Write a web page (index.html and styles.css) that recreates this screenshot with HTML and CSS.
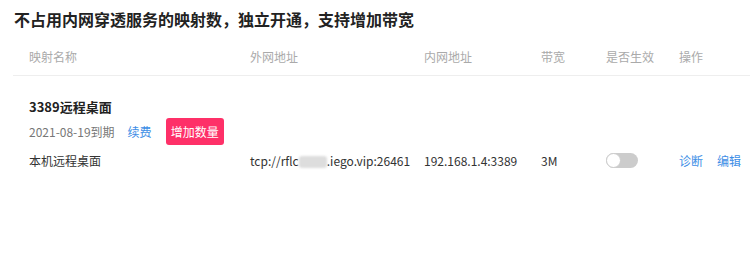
FILE: index.html
```html
<!DOCTYPE html>
<html lang="zh-CN">
<head>
  <meta charset="UTF-8" />
  <title>映射列表</title>
  <link rel="stylesheet" href="styles.css">
</head>
<body>

  <h2 class="title">不占用内网穿透服务的映射数，独立开通，支持增加带宽</h2>

  <div class="table">
    <div class="row head">
      <span>映射名称</span>
      <span>外网地址</span>
      <span>内网地址</span>
      <span>带宽</span>
      <span>是否生效</span>
      <span>操作</span>
    </div>

    <div class="group">
      <div class="group-name">3389远程桌面</div>
      <div class="group-info">
        <span class="expire">2021-08-19到期</span>
        <a class="link">续费</a>
        <button class="add-btn">增加数量</button>
      </div>
      <div class="row item">
        <span>本机远程桌面</span>
        <span>tcp://rflc<i class="mask"></i>.iego.vip:26461</span>
        <span>192.168.1.4:3389</span>
        <span>3M</span>
        <span><i class="switch"></i></span>
        <span class="ops"><a class="link">诊断</a><a class="link">编辑</a></span>
      </div>
    </div>
  </div>

</body>
</html>
```

FILE: styles.css
```css
body {
  margin: 0;
  font-family: "Noto Sans CJK SC", "Noto Sans", sans-serif;
  color: #333;
  background: #fff;
}
.title {
  margin: 0;
  padding: 8px 14px 0;
  height: 30px;
  line-height: 22px;
  font-size: 16px;
  font-weight: bold;
  color: #222;
}
.table {
  margin-left: 13px;
}
.row {
  display: grid;
  grid-template-columns: 221px 174px 117px 65px 73px 1fr;
  padding-left: 16px;
  align-items: center;
  font-size: 12px;
  white-space: nowrap;
}
.head {
  height: 37px;
  color: #aaa;
  border-bottom: 1px solid #eee;
}
.group {
  padding-top: 21px;
}
.group-name {
  padding-left: 16px;
  font-size: 13px;
  font-weight: bold;
  line-height: 20px;
  color: #222;
}
.group-info {
  display: flex;
  align-items: center;
  padding-left: 16px;
  margin-top: 1px;
  font-size: 12px;
}
.expire {
  color: #777;
}
.link {
  color: #3d8ee6;
  cursor: pointer;
}
.group-info .link {
  margin-left: 13px;
}
.add-btn {
  margin-left: 14px;
  height: 27px;
  padding: 0 5px;
  border: none;
  border-radius: 3px;
  background: #fe3068;
  color: #fff;
  font-family: inherit;
  font-size: 12px;
}
.item {
  height: 27px;
  margin-top: 2px;
  color: #333;
}
.mask {
  display: inline-block;
  width: 28px;
  height: 12px;
  vertical-align: -2px;
  background: #ddd;
  border-radius: 3px;
  filter: blur(1px);
}
.switch {
  display: block;
  position: relative;
  width: 32px;
  height: 15px;
  border-radius: 8px;
  background: #ccc;
}
.switch::after {
  content: "";
  position: absolute;
  left: 0;
  top: 0;
  width: 13px;
  height: 13px;
  border-radius: 50%;
  background: #fff;
  border: 1px solid #ccc;
}
.ops .link {
  margin-right: 14px;
}
```
